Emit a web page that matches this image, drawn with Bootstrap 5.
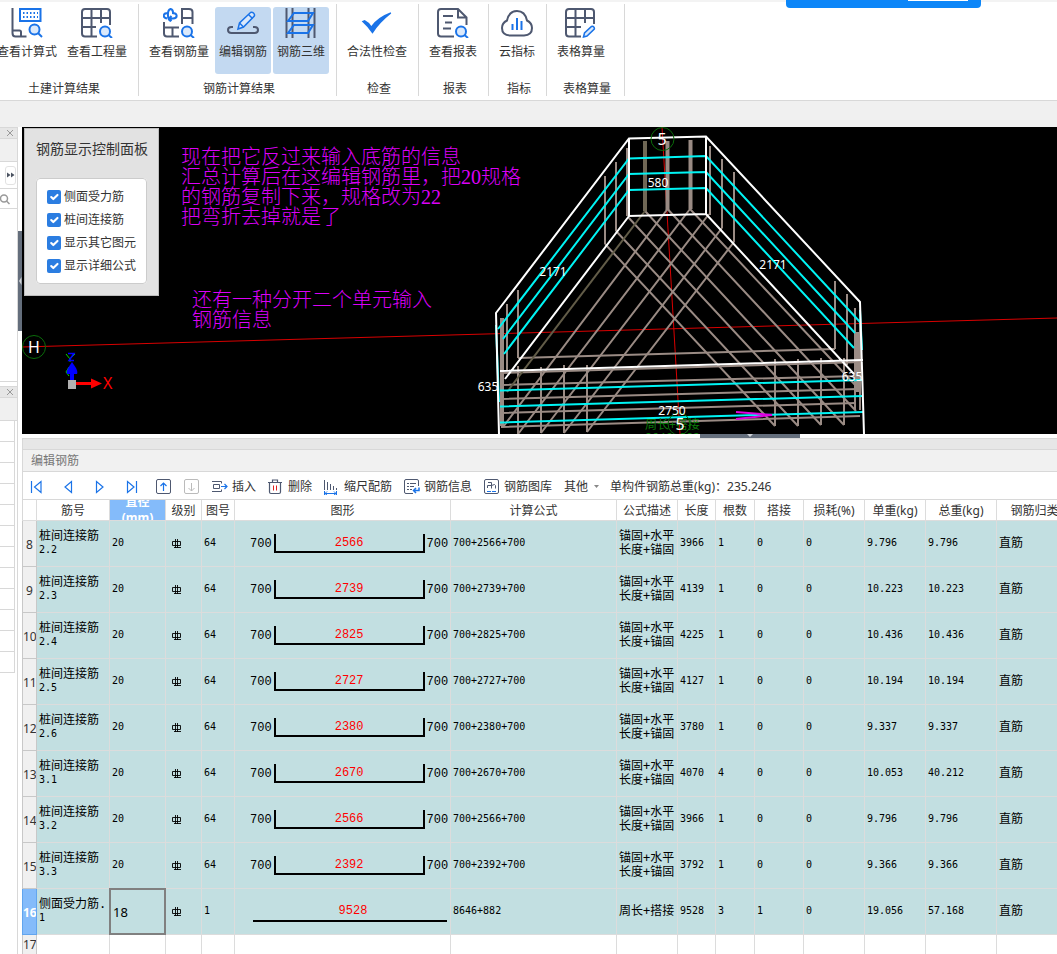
<!DOCTYPE html>
<html lang="zh-CN">
<head>
<meta charset="utf-8">
<meta name="viewport" content="width=device-width, initial-scale=1">
<title>编辑钢筋</title>
<link href="https://cdn.jsdelivr.net/npm/bootstrap@5.3.0/dist/css/bootstrap.min.css" rel="stylesheet">
<style>
  :root { --ink:#333; --slate:#4e5870; --blue:#1a73e8; --line:#d8d8d8; --pane:#f0f0f0; --cell:#c2dfe1; }
  body { font-family:"Noto Sans","Noto Sans CJK SC",sans-serif; font-size:12px; line-height:14px; color:var(--ink); background:#fff; }
  button { background:none; border:0; padding:0; color:inherit; white-space:nowrap; }
  svg { display:block; flex:none; }
  .ln { fill:none; stroke:var(--slate); stroke-width:2; }
  .bl { fill:none; stroke:var(--blue); stroke-width:2; }
  .lens { fill:#dbe9fb; stroke:var(--blue); stroke-width:2; }

  /* ribbon */
  .ribbon { height:101px; padding-top:4px; border-bottom:1px solid var(--line); box-shadow:inset 0 2px 0 #f3f3f3; }
  .rgroup { height:92px; border-right:1px solid var(--line); padding:3px 7px 0 6px; text-align:center; }
  .rgroup.first { margin-left:-8px; padding:3px 6px 0 0; }
  .rgroup.slim { padding:3px 1px 0 0; }
  .rbtn { height:67px; min-width:56px; padding:1px 4px 0; border-radius:3px; display:flex; flex-direction:column; align-items:center; gap:7px; }
  .rbtn.wide { width:70px; }
  .rbtn.mid { width:68px; }
  .rbtn.on { background:#c3d9f1; }
  .rlabel { margin-top:8px; padding-left:4px; }
  .tab-strip { height:26px; background:var(--pane); }
  .share { top:0; left:786px; width:195px; height:8px; background:#0c86f8; border-radius:0 0 4px 4px; }
  .share span { width:60px; height:1px; margin-left:122px; background:#fff; display:block; }

  /* left docks */
  .dock { width:18px; border-right:1px solid var(--line); }
  .dock-head { height:12px; background:#e6e6e6; border-bottom:1px solid var(--line); border-top:1px solid var(--line); display:flex; justify-content:flex-end; align-items:center; padding-right:3px; }
  .dock-tool { height:23px; background:var(--pane); border-bottom:1px solid var(--line); }
  .dock-more { height:27px; border-bottom:1px solid var(--line); display:flex; align-items:center; justify-content:flex-end; padding-right:1px; }
  .dock-more button { width:11px; height:19px; border:1px solid #e2e2e2; border-radius:3px; }
  .dock-find { height:20px; border-bottom:1px solid var(--line); padding-top:5px; }
  .dock-upper { height:255px; border-bottom:1px solid var(--line); overflow:hidden; }
  .dock-rows div { height:21px; width:15px; border-right:1px solid var(--line); border-bottom:1px solid var(--line); }
  .grip-v { width:4px; height:307px; display:flex; align-items:center; }
  .grip-v button { width:4px; height:100px; background:#646e7c; }
  .grip-h { height:4px; }
  .grip-h button { width:100px; height:4px; background:#646e7c; margin-left:678px; display:flex; justify-content:center; }

  /* 3D view */
  .view { height:307px; background:#000; position:relative; overflow:hidden; }
  .w { stroke:#fff; stroke-width:2; fill:none; }
  .c { stroke:#00f4f4; stroke-width:2; fill:none; }
  .g { stroke:#9a8b84; stroke-width:2; fill:none; }
  .r { stroke:#d80000; stroke-width:1; fill:none; }
  .gr { stroke:#0a6c0a; stroke-width:1; fill:none; }
  .dim { fill:#fff; font-size:12px; text-anchor:middle; }
  .axis { fill:#fff; font-size:16px; text-anchor:middle; }
  .note { fill:#dc00f8; font-family:"Liberation Serif","Noto Sans CJK SC",serif; font-size:20px; font-weight:300; }
  .ctl { position:absolute; left:2px; top:1px; width:135px; height:168px; background:#e2e2e2; border:1px solid #bdbdbd; padding:11px 11px 0; }
  .ctl h2 { font-size:14px; line-height:18px; margin:0 0 20px; font-weight:400; white-space:nowrap; }
  .ctl fieldset { height:106px; border:1px solid #ccc; border-radius:4px; background:#fff; padding:6px 10px; }
  .ctl .form-check { height:23px; min-height:0; margin:0; padding:0; display:flex; align-items:center; gap:3px; }
  .ctl .form-check-input { float:none; width:14px; height:14px; margin:0; border-radius:2px; border:0; background-color:#2b7de1; }

  /* rebar editor */
  .editor { border-left:1px solid var(--line); }
  .strip { height:12px; background:#e7e7e7; border-top:1px solid var(--line); border-bottom:1px solid var(--line); }
  .caption { height:22px; line-height:21px; margin:0; padding-left:8px; font-size:12px; background:#f1f1f1; color:#777; border-bottom:1px solid var(--line); font-weight:400; }
  .tools { height:27px; gap:12px; white-space:nowrap; padding-top:2px; }
  .tools button { display:flex; align-items:center; gap:4px; }
  .nav-set { margin:0 -6px 0 -1px; }
  .nav-set button { width:28px; justify-content:center; }
  .grid-wrap { overflow:hidden; margin-left:-1px; }
  .rebar { table-layout:fixed; width:1051px; border-collapse:separate; border-spacing:0; }
  .rebar th, .rebar td { padding:0 2px 2px; border-right:1px solid #dcdcdc; border-bottom:1px solid #dcdcdc; overflow:hidden; vertical-align:middle; }
  .rebar thead th { height:22px; padding:1px 0 0; border-top:1px solid var(--line); text-align:center; font-weight:400; white-space:nowrap; }
  .rebar thead th:first-child, .rebar tbody th { border-left:1px solid var(--line); }
  .rebar thead th.picked { background:#84bbfa; color:#fff; font-weight:700; padding:0; }
  .picked div { height:20px; line-height:16px; display:flex; flex-direction:column; justify-content:center; }
  .rebar tbody th { background:var(--pane); padding:3px 0 0; font-weight:400; text-align:center; border-color:#c8c8c8; }
  .rebar tbody tr { height:46px; }
  .rebar tbody td { background:var(--cell); color:#000; font-family:"DejaVu Sans Mono","Noto Sans CJK SC",monospace; font-size:10px; }
  .rebar tbody td.cjk { font-size:12px; white-space:nowrap; }
  .rebar td.cjk small { font-size:10px; display:block; }
  .rebar tr.current th { background:#84bbfa; color:#fff; font-weight:700; border-color:#61a5ee; }
  .rebar tr.blank td { background:#fff; }
  .rebar tr.blank th { vertical-align:top; }
  .rebar tbody td.edit { padding:0; overflow:visible; position:relative; }
  .edit input { display:block; width:57px; height:47px; margin:-1px; border:2px solid #808080; border-radius:0; background:var(--cell); padding:0 2px; font:13px "Noto Sans",sans-serif; }
  .rebar tbody td.shape-cell { padding:0; }
  .shape { display:flex; align-items:center; font-family:"Liberation Mono",monospace; font-size:12px; padding-left:15px; gap:2px; }
  .shape b { flex:none; font-weight:400; color:#f00; width:151px; height:19px; line-height:18px; border:solid #000; border-width:0 2px 2px; text-align:center; }
  .shape.straight b { width:194px; height:20px; border-width:0 0 2px; margin-left:3px; padding-left:6px; }
</style>
</head>
<body class="vh-100 overflow-hidden">

<svg width="0" height="0" class="position-absolute">
  <symbol id="hrb" viewBox="0 0 10 10"><path d="M3.500 0v9M5.500 0v9M.5 2.500h8v4h-8zM2 8.500h7" fill="none" stroke="#000" stroke-width=".9"/></symbol>
  <symbol id="close" viewBox="0 0 8 8"><path d="M1 1l6 6M7 1L1 7" stroke="#999" fill="none"/></symbol>
</svg>

<div class="d-flex flex-column h-100">
<header class="ribbon d-flex flex-shrink-0 overflow-hidden">
  <section class="rgroup first">
    <div class="d-flex">
      <button class="rbtn wide"><svg width="32" height="30"><path class="ln" d="M1.500 0v25q0 3.500 3 3.500h11M1.500 22.500h7q1.500 0 1.500 1.500v4"/><path class="bl" d="M9 1h20.500v12H9z"/><path class="bl" stroke-dasharray="1.500 2" d="M12 5h15M12 9h15"/><circle class="lens" cx="23.500" cy="21.500" r="5"/><path class="bl" d="M27 25l4 4"/></svg>查看计算式</button>
      <button class="rbtn wide"><svg width="32" height="30"><path class="ln" d="M16 28.500H4q-3 0-3-3V4q0-3 3-3h22q3 0 3 3v13M1 10h28M1 19h14M10.500 1v27.500M20 1v14"/><circle class="lens" cx="24" cy="23.500" r="5"/><path class="bl" d="M27.500 27l3.500 3"/></svg>查看工程量</button>
    </div>
    <div class="rlabel">土建计算结果</div>
  </section>
  <section class="rgroup">
    <div class="d-flex" style="gap:2px">
      <button class="rbtn mid"><svg width="32" height="30"><path class="bl" d="M4 10.500C-1 9.500 0 5 5 5M9 5c6 0 6 5 1 5.500H6M8 13C4 12 4 2 7.500 1c2 .5 2.500 2 2.500 3.500M8.500 8L6 10.500 8.500 13"/><path class="ln" d="M19 16V1h7q3.500 0 3.500 3v12M19 10h10.500M1 14v11.500q0 3 3 3h12M1 19.500h15M9.500 19.500v9"/><circle class="lens" cx="24" cy="23.500" r="5"/><path class="bl" d="M27.500 27l3.500 3"/></svg>查看钢筋量</button>
      <button class="rbtn on"><svg width="32" height="30"><path class="ln" d="M6 19H4.500q-3.500 0-3.500 3t3.500 3h23q3.500 0 3.500-3t-3.500-3H26"/><path class="lens" style="stroke-width:1.500" d="M11 21l1.500-6L23.500 4.500q1.500-.8 3 .5t.8 3L16.500 19z"/><path class="bl" style="stroke-width:1.500" d="M21.500 6.500l4 4M12.500 15l4 4"/></svg>编辑钢筋</button>
      <button class="rbtn on"><svg width="32" height="30"><path class="ln" d="M1.500 0v30M7.500 0v30M23.500 0v30M29.500 0v30"/><path class="bl" d="M9 5h19l-5 8H3zM9 17h19l-5 8H3z"/></svg>钢筋三维</button>
    </div>
    <div class="rlabel">钢筋计算结果</div>
  </section>
  <section class="rgroup">
    <div class="d-flex"><button class="rbtn mid"><svg width="32" height="30"><path fill="#1a73e8" d="M.7 13.300L3.700 12q4 2 6.600 6Q17 9 29.700 4.300l.5 1.200Q18 15 11.500 25.700 7 19 .7 13.300z"/></svg>合法性检查</button></div>
    <div class="rlabel">检查</div>
  </section>
  <section class="rgroup">
    <div class="d-flex"><button class="rbtn"><svg width="32" height="30"><path class="ln" d="M17 28.500H4q-3 0-3-3V4q0-3 3-3h17l8.500 8.500V17M21 1v8.500h8.500M6 8h10M8 14.500h7M6 20.500h8"/><circle class="lens" cx="24" cy="23.500" r="5"/><path class="bl" d="M27.500 27l3.500 3"/></svg>查看报表</button></div>
    <div class="rlabel">报表</div>
  </section>
  <section class="rgroup slim">
    <div class="d-flex"><button class="rbtn"><svg width="32" height="30"><path class="ln" d="M9 27.500q-8-.5-8-7.500 0-5 5-7.500Q8 3 16 3t10 9.500q5 2.500 5 7.500 0 7-8 7.500z"/><path class="bl" d="M11.500 16v6M16 10v12M20.500 13v9"/></svg>云指标</button></div>
    <div class="rlabel">指标</div>
  </section>
  <section class="rgroup">
    <div class="d-flex pe-2"><button class="rbtn"><svg width="32" height="30"><path class="ln" d="M16 28.500H4q-3 0-3-3V4q0-3 3-3h22q3 0 3 3v12M1 10h28M1 19h15M10.500 1v27.500M20 1v14"/><path class="lens" style="stroke-width:1.500" d="M18.500 29l1-4 7-6.500q1.500-.5 2.300.5t.5 2L22 28z"/></svg>表格算量</button></div>
    <div class="rlabel">表格算量</div>
  </section>
</header>
<div class="share position-absolute"><span></span></div>
<div class="tab-strip flex-shrink-0"></div>

<div class="d-flex flex-grow-1 overflow-hidden">
  <aside class="dock flex-shrink-0">
    <div class="dock-upper">
      <div class="dock-head"><button aria-label="关闭"><svg width="8" height="8"><use href="#close"/></svg></button></div>
      <div class="dock-tool"></div>
      <div class="dock-more"><button aria-label="更多"><svg width="9" height="8"><path fill="#4a5260" d="M1 1.500l3.500 2.500L1 6.500zM5 1.500L8.500 4 5 6.500z"/></svg></button></div>
      <div class="dock-find"><svg width="10" height="11"><circle cx="4" cy="4.500" r="3.500" fill="none" stroke="#999" stroke-width="1.500"/><path d="M6.500 7l3 3" stroke="#999" stroke-width="1.500"/></svg></div>
    </div>
    <div class="dock-head mt-1"><button aria-label="关闭"><svg width="8" height="8"><use href="#close"/></svg></button></div>
    <div class="dock-tool"></div>
    <div class="dock-rows"><div></div><div></div><div></div><div></div><div></div><div></div><div></div><div></div><div></div><div></div><div></div><div></div></div>
  </aside>
  <div class="grip-v flex-shrink-0"><button aria-label="折叠"><svg width="4" height="100"><path d="M3.500 46v8L1 50z" fill="#cfd3d8"/></svg></button></div>

  <main class="flex-grow-1 overflow-hidden">
    <div class="view">
      <svg width="100%" height="307" viewBox="22 127 1035 307" preserveAspectRatio="xMinYMin slice">
        <path class="r" d="M22 347L1057 318M662 127L680 434"/>
        <g class="g">
          <path d="M667.500 209L503 427M690 209L518 434M709 214L541 433M722 228L564 433M734 242L587 432"/>
          <path d="M690 209L858 388M667.500 209L856 411M645 211L844 425M628 217L821 425M616 231L798 426M605 244L775 426"/>
          <path d="M518 358L835 349M501 373L862 362M501 385L858 376M501 399L858 389M501 413L856 403M501 427L860 416"/>
          <path d="M627 148v68M616 162v69M605 176v68M710 146v69M722 159v69M734 172v70"/>
          <path stroke-width="4" d="M667.500 141v69M690.500 140v69M502 318v108"/>
          <path d="M518 290v68M507 304v66M518 366v68M541 367v66M564 365v68M587 365v67"/>
          <path d="M835 281v68M847 294v71M855 308v102M860 320v90M775 359v67M798 359v67M821 358v67M844 358v67"/>
          <path stroke-width="6" d="M857.500 332v60"/>
        </g>
        <path d="M645 211L507 392" stroke="#625c48" stroke-width="2"/>
        <path d="M645 141v70" stroke="#6f6755" stroke-width="4"/>
        <path class="c" d="M498 329L629 158.500L706 156L860 322M503 339L629 174L706 172L855 333M504 354L629 190L706 188L854 348M496 325L499 402M860 310L862 350M500 390.500L863 380M500 406.500L863 396M500 422.500L863 412"/>
        <path class="w" d="M499 434L496 313L629 138.500L706 136.500L860 302L864 434M629 139V216L706 214V137M629 216L505 379M706 214L854 374M500 371L863 360"/>
        <g class="gr"><circle cx="662.500" cy="139" r="11.500"/><circle cx="34" cy="347" r="11.500"/><circle cx="679" cy="424" r="11"/></g>
        <path d="M736 412L772 415L736 419" fill="none" stroke="#e000e0" stroke-width="2"/>
        <text class="axis" x="662" y="145">5</text><text class="axis" x="34" y="353">H</text>
        <text x="645" y="429" font-size="12" fill="#0a7a0a">周长+搭接</text>
        <text x="645" y="442" font-size="12" fill="#0a7a0a">8646+882</text>
        <text class="axis" x="680" y="430">5</text>
        <text class="dim" x="658" y="187">580</text><text class="dim" x="553" y="276">2171</text><text class="dim" x="773" y="269">2171</text>
        <text class="dim" x="488" y="391">635</text><text class="dim" x="852" y="381">635</text><text class="dim" x="672" y="415">2750</text>
        <path d="M76 383.500h17" stroke="#f00" stroke-width="3"/><path d="M91 378.500l11 5-11 5z" fill="#f00"/>
        <path d="M66 354l4 5 5-5M70 359v3M69 367l-3 5 3 4" fill="none" stroke="#0d0"/>
        <path d="M68 353.500h6l-5 7h5" fill="none" stroke="#00f" stroke-width="1.500"/>
        <path d="M72 362l4 6q2 4 1 6H67q-1-2 1-6z" fill="#00f"/><path d="M72 374v8" stroke="#00f" stroke-width="4"/>
        <path d="M68 380h8v9h-8z" fill="#b0b0b0"/>
        <text x="103" y="389" font-size="16" fill="#f00">X</text>
        <g class="note">
          <text x="181" y="164">现在把它反过来输入底筋的信息</text>
          <text x="181" y="184">汇总计算后在这编辑钢筋里，把20规格</text>
          <text x="181" y="204">的钢筋复制下来，规格改为22</text>
          <text x="181" y="224">把弯折去掉就是了</text>
          <text x="192" y="307">还有一种分开二个单元输入</text>
          <text x="192" y="327">钢筋信息</text>
        </g>
      </svg>
      <div class="ctl">
        <h2>钢筋显示控制面板</h2>
        <fieldset>
          <div class="form-check"><input class="form-check-input" type="checkbox" id="k1" checked><label for="k1">侧面受力筋</label></div>
          <div class="form-check"><input class="form-check-input" type="checkbox" id="k2" checked><label for="k2">桩间连接筋</label></div>
          <div class="form-check"><input class="form-check-input" type="checkbox" id="k3" checked><label for="k3">显示其它图元</label></div>
          <div class="form-check"><input class="form-check-input" type="checkbox" id="k4" checked><label for="k4">显示详细公式</label></div>
        </fieldset>
      </div>
    </div>
    <div class="grip-h"><button aria-label="折叠"><svg width="8" height="4"><path d="M1 0h6L4 3z" fill="#cfd3d8"/></svg></button></div>

    <section class="editor">
      <div class="strip"></div>
      <h1 class="caption">编辑钢筋</h1>
      <div class="tools d-flex align-items-center">
        <div class="nav-set d-flex">
          <button class="me-1" aria-label="首条"><svg width="16" height="16" fill="none" stroke="#1a73e8"><path stroke-width="1.200" d="M3.500 2v12M13 2.500v11L6.500 8z"/></svg></button>
          <button class="me-1" aria-label="上一条"><svg width="16" height="16" fill="none" stroke="#1a73e8"><path stroke-width="1.200" d="M11.500 2.500v11L5 8z"/></svg></button>
          <button class="me-1" aria-label="下一条"><svg width="16" height="16" fill="none" stroke="#1a73e8"><path stroke-width="1.200" d="M4.500 2.500v11L11 8z"/></svg></button>
          <button class="me-1" aria-label="末条"><svg width="16" height="16" fill="none" stroke="#1a73e8"><path stroke-width="1.200" d="M3.500 2.500v11L10 8zM12.500 2v12"/></svg></button>
          <button aria-label="上移"><svg width="16" height="16" fill="none"><rect x=".5" y=".5" width="14" height="14" rx="1.500" stroke="#4e5870"/><path stroke="#1a73e8" stroke-width="1.200" d="M7.500 12V4M4.500 7l3-3 3 3"/></svg></button>
          <button aria-label="下移" disabled><svg width="16" height="16" fill="none" stroke="#bbb"><rect x=".5" y=".5" width="14" height="14" rx="1.500"/><path d="M7.500 4v8M4.500 9l3 3 3-3"/></svg></button>
        </div>
        <button><svg width="16" height="16" fill="none"><path stroke="#4e5870" d="M0 2.500h9.500v2M0 12.500h9.500v-2M1.500 5.500h6v4h-6z"/><path stroke="#1a73e8" stroke-width="1.200" d="M9 7.500h6M12.500 5l2.500 2.500L12.500 10"/></svg>插入</button>
        <button><svg width="16" height="16" fill="none"><path stroke="#4e5870" stroke-width="1.200" d="M0 3.500h14M4.500 3V1h5v2M1.500 3.500V13q0 1.500 1.500 1.500h8q1.500 0 1.500-1.500V3.500"/><path stroke="#e02020" d="M5.500 6.500v5M8.500 6.500v5"/></svg>删除</button>
        <button><svg width="16" height="16" fill="none"><path stroke="#4e5870" d="M.5 1v10M3.500 3v8M6.500 5v6M9.500 7v4M12.500 9v2"/><path stroke="#1a73e8" d="M.5 12v4M12.500 12v4M1 14.500h11M3 12.500l-2 2 2 1.500M10 12.500l2 2-2 1.500"/></svg>缩尺配筋</button>
        <button><svg width="16" height="16" fill="none"><path stroke="#4e5870" d="M9 14.500H2Q.5 14.500.5 13V2Q.5.500 2 .500h11q1.500 0 1.500 1.500v5M3 4.500h2M6 4.500h6M3 7.500h2M6 7.500h4M3 10.500h2M6 10.500h2"/><path stroke="#1a73e8" stroke-width="1.500" d="M15 8.500v3h-5M12 9l-2.500 2.500L12 14"/></svg>钢筋信息</button>
        <button><svg width="16" height="16" fill="none"><rect x=".5" y=".5" width="14" height="14" rx="1.500" stroke="#4e5870"/><path stroke="#4e5870" d="M4 3.500h3.500v6M3.500 9V6.500h4M7.500 6.500q4-2 4 0v3"/><path stroke="#1a73e8" d="M3 12.500h4M8 12.500h4"/></svg>钢筋图库</button>
        <button>其他<svg width="10" height="6"><path d="M2 1h5L4.500 4z" fill="#888"/></svg></button>
        <span style="margin-left:-4px">单构件钢筋总重(kg)：235.246</span>
      </div>
      <div class="grid-wrap">
        <table class="rebar">
          <colgroup><col style="width:15px"><col style="width:73px"><col style="width:56px"><col style="width:36px"><col style="width:33px"><col style="width:216px"><col style="width:166px"><col style="width:61px"><col style="width:38px"><col style="width:39px"><col style="width:49px"><col style="width:61px"><col style="width:61px"><col style="width:71px"><col style="width:76px"></colgroup>
          <thead><tr><th></th><th>筋号</th><th class="picked"><div><span>直径</span><span>(mm)</span></div></th><th>级别</th><th>图号</th><th>图形</th><th>计算公式</th><th>公式描述</th><th>长度</th><th>根数</th><th>搭接</th><th>损耗(%)</th><th>单重(kg)</th><th>总重(kg)</th><th>钢筋归类</th></tr></thead>
          <tbody id="rows"></tbody>
        </table>
      </div>
    </section>
  </main>
</div>
</div>

<script>
  // no, name suffix, middle leg, length, count, unit weight, total weight
  const bent = [
    [8, '2.2', 2566, 3966, 1, '9.796', '9.796'],
    [9, '2.3', 2739, 4139, 1, '10.223', '10.223'],
    [10, '2.4', 2825, 4225, 1, '10.436', '10.436'],
    [11, '2.5', 2727, 4127, 1, '10.194', '10.194'],
    [12, '2.6', 2380, 3780, 1, '9.337', '9.337'],
    [13, '3.1', 2670, 4070, 4, '10.053', '40.212'],
    [14, '3.2', 2566, 3966, 1, '9.796', '9.796'],
    [15, '3.3', 2392, 3792, 1, '9.366', '9.366']
  ];
  const grade = '<td class="pb-0"><svg class="ms-1" width="10" height="10" role="img" aria-label="HRB400"><use href="#hrb"/></svg></td>';
  const rows = bent.map(([no, id, leg, len, n, unit, total]) => `<tr><th>${no}</th>
    <td class="cjk">桩间连接筋<small>${id}</small></td><td>20</td>${grade}<td>64</td>
    <td class="shape-cell"><div class="shape">700<b>${leg}</b>700</div></td><td>700+${leg}+700</td>
    <td class="cjk">锚固+水平<br>长度+锚固</td><td>${len}</td><td>${n}</td><td>0</td><td>0</td>
    <td>${unit}</td><td>${total}</td><td class="cjk">直筋</td></tr>`);
  rows.push(`<tr class="current"><th>16</th><td class="cjk">侧面受力筋.<small>1</small></td>
    <td class="edit"><input type="text" value="18" aria-label="直径"></td>${grade}<td>1</td>
    <td class="shape-cell"><div class="shape straight"><b>9528</b></div></td><td>8646+882</td>
    <td class="cjk">周长+搭接</td><td>9528</td><td>3</td><td>1</td><td>0</td><td>19.056</td><td>57.168</td><td class="cjk">直筋</td></tr>`);
  rows.push('<tr class="blank"><th>17</th>' + '<td></td>'.repeat(14) + '</tr>');
  document.getElementById('rows').innerHTML = rows.join('');
</script>
<script src="https://cdn.jsdelivr.net/npm/bootstrap@5.3.0/dist/js/bootstrap.bundle.min.js"></script>
</body>
</html>
